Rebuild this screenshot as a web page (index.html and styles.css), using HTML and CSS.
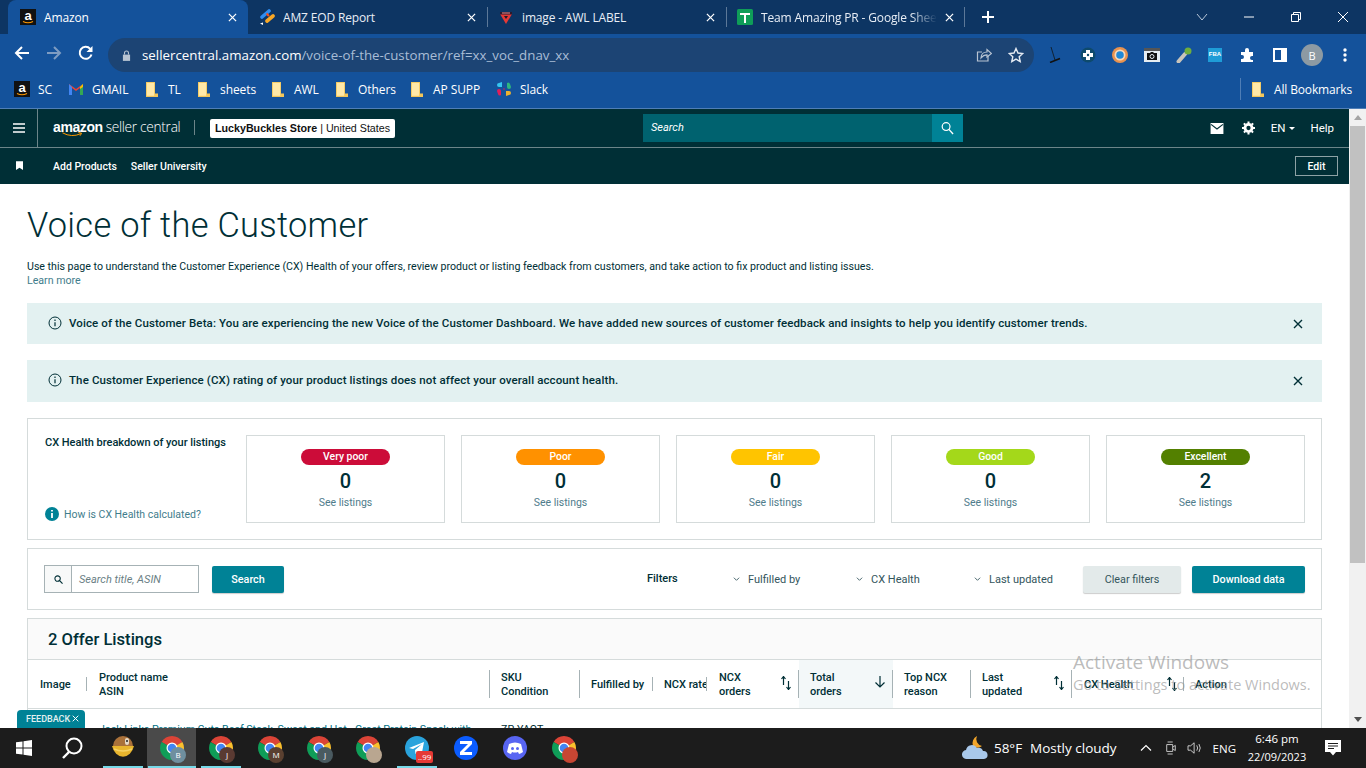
FILE: index.html
```html
<!DOCTYPE html>
<html lang="en">
<head>
    <meta charset="UTF-8">
    <title>Voice of the Customer</title>
    <link rel="stylesheet" href="styles.css">
</head>
<body>

<svg class="defs" width="0" height="0">
    <symbol id="chrome" viewBox="0 0 24 24">
        <path fill="#db4437" d="M12 12L1.610 6A12 12 0 0 1 22.390 6z"/>
        <path fill="#fbc02d" d="M12 12L22.390 6A12 12 0 0 1 12 24z"/>
        <path fill="#0f9d58" d="M12 12L12 24A12 12 0 0 1 1.610 6z"/>
        <circle cx="12" cy="12" r="5.500" fill="#fff"/>
        <circle cx="12" cy="12" r="4.300" fill="#4285f4"/>
    </symbol>
    <symbol id="folder" viewBox="0 0 12 15">
        <path fill="#f3c65a" d="M0 0h9v11.500h3V15H0z"/>
        <path fill="#ffe9a8" d="M.8.800h7.400v13H.8z"/>
    </symbol>
    <symbol id="amz" viewBox="0 0 16 16">
        <rect width="16" height="16" fill="#111"/>
        <text x="8" y="11" text-anchor="middle" font-family="Liberation Sans" font-size="13" font-weight="700" fill="#fff">a</text>
        <path d="M3 12.500q5 2.500 10 0" fill="none" stroke="#f90" stroke-width="1.200"/>
    </symbol>
    <symbol id="sort" viewBox="0 0 12 14">
        <path d="M3.500 9V1M1.500 3l2-2.500 2 2.500" fill="none" stroke="#002f36" stroke-width="1.200"/>
        <path d="M8.500 5v8M6.500 11l2 2.500 2-2.500" fill="none" stroke="#002f36" stroke-width="1.200"/>
    </symbol>
    <symbol id="close" viewBox="0 0 10 10">
        <path d="M1 1l8 8M9 1l-8 8" fill="none" stroke="currentColor" stroke-width="1.400"/>
    </symbol>
    <symbol id="info" viewBox="0 0 14 14">
        <circle cx="7" cy="7" r="6" fill="none" stroke="#002f36" stroke-width="1"/>
        <path d="M7 6.200v4M7 3.600v1.300" stroke="#002f36" stroke-width="1.200"/>
    </symbol>
    <symbol id="chev" viewBox="0 0 8 6">
        <path d="M1 1.500l3 3 3-3" fill="none" stroke="#33555c" stroke-width="1"/>
    </symbol>
</svg>

<div class="tabstrip">
    <div class="tab active">
        <svg class="fav"><use href="#amz"/></svg>
        <span class="tab-title">Amazon</span>
        <svg class="tab-x"><use href="#close"/></svg>
    </div>
    <div class="tab">
        <svg class="fav" viewBox="0 0 16 16"><path d="M3 8L10 2" stroke="#2d8cf0" stroke-width="3.600" stroke-linecap="round"/><path d="M8 12l6-5" stroke="#f9a825" stroke-width="3.600" stroke-linecap="round"/><path d="M8 6.500l1.500-1.300" stroke="#f4511e" stroke-width="3.600"/><path d="M1 14.500l3-1v2.500z" fill="#fff"/></svg>
        <span class="tab-title">AMZ EOD Report</span>
        <svg class="tab-x"><use href="#close"/></svg>
    </div>
    <div class="tab sep">
        <svg class="fav" viewBox="0 0 16 16"><path d="M2 5h12l-6 10z" fill="#e53935"/><path d="M2 3h12v2.500H2z" fill="#2a1a2e"/><path d="M4 4h8" stroke="#e88" stroke-width="1"/><path d="M6 7h4l-2 3z" fill="#1a1a2a"/></svg>
        <span class="tab-title">image - AWL LABEL</span>
        <svg class="tab-x"><use href="#close"/></svg>
    </div>
    <div class="tab sep last">
        <svg class="fav" viewBox="0 0 16 16"><rect width="16" height="16" rx="1.500" fill="#0f9d58"/><path d="M3 4h10v2H9v8H7V6H3z" fill="#fff"/></svg>
        <span class="tab-title fade">Team Amazing PR - Google Sheets</span>
        <svg class="tab-x"><use href="#close"/></svg>
    </div>
    <svg class="newtab" viewBox="0 0 14 14"><path d="M7 1v12M1 7h12" stroke="#fff" stroke-width="2"/></svg>
    <div class="winctl">
        <svg viewBox="0 0 12 8"><path d="M1 1l5 6 5-6" fill="none" stroke="#b9c8da" stroke-width="1"/></svg>
        <svg viewBox="0 0 12 12"><path d="M1 6h10" stroke="#fff" stroke-width="1"/></svg>
        <svg viewBox="0 0 12 12"><path d="M1.500 3.500h7v7h-7zM3.500 3.500v-2h7v7h-2" fill="none" stroke="#fff" stroke-width="1"/></svg>
        <svg viewBox="0 0 12 12"><path d="M1 1l10 10M11 1L1 11" stroke="#fff" stroke-width="1"/></svg>
    </div>
</div>

<div class="toolbar">
    <svg class="nav-ic" viewBox="0 0 16 16"><path d="M15 8H2M8 2L2 8l6 6" fill="none" stroke="#fff" stroke-width="2"/></svg>
    <svg class="nav-ic" viewBox="0 0 16 16"><path d="M1 8h13M8 2l6 6-6 6" fill="none" stroke="#7e9cc2" stroke-width="2"/></svg>
    <svg class="nav-ic" viewBox="0 0 16 16"><path d="M13.500 9.500A6 6 0 1 1 12.200 3.800" fill="none" stroke="#fff" stroke-width="2"/><path d="M14.500 1v6h-6z" fill="#fff"/></svg>
    <div class="omnibox">
        <svg class="lock" viewBox="0 0 10 12"><path d="M1 5h8v7H1z" fill="#b8c4d2"/><path d="M2.800 5V3.200a2.200 2.200 0 0 1 4.400 0V5" fill="none" stroke="#b8c4d2" stroke-width="1.200"/></svg>
        <span class="url">sellercentral.amazon.com<span class="url-path">/voice-of-the-customer/ref=xx_voc_dnav_xx</span></span>
        <svg class="omni-ic share" viewBox="0 0 16 16"><path d="M12 9v5H1.500V5H6" fill="none" stroke="#b8c4d2" stroke-width="1.200"/><path d="M5 11c0-4 3-6 6-6V2.500L15.500 6.500 11 10V7.800C8.500 7.800 6.500 9 5 11z" fill="none" stroke="#b8c4d2" stroke-width="1.200"/></svg>
        <svg class="omni-ic" viewBox="0 0 16 16"><path d="M8 1.500l2 4.500 4.800.5-3.600 3.200 1 4.800L8 12.100l-4.200 2.400 1-4.800L1.200 6.500 6 6z" fill="none" stroke="#e4eaf2" stroke-width="1.400"/></svg>
    </div>
    <div class="extensions">
        <svg viewBox="0 0 16 16"><path d="M3 0l4 13" stroke="#123" stroke-width="1" fill="none"/><path d="M2 15.500l10-4" stroke="#111" stroke-width="1.600" fill="none"/></svg>
        <svg viewBox="0 0 16 16"><circle cx="8" cy="8" r="7.500" fill="#0e4a6c"/><path d="M6 3h4v3h3v4h-3v3H6v-3H3V6h3z" fill="#fff"/><circle cx="8" cy="8" r="1.200" fill="#0e4a6c"/></svg>
        <svg viewBox="0 0 16 16"><circle cx="8" cy="8" r="8" fill="#e8924f"/><circle cx="8" cy="8" r="5.500" fill="#f5d9bc"/><circle cx="8" cy="8" r="3.800" fill="#1e88d8"/></svg>
        <svg viewBox="0 0 16 16"><rect y="1" width="16" height="14" fill="#e6edf2"/><rect y="1" width="16" height="3" fill="#555"/><path d="M3 6h3l1-1h2l1 1h3v7H3z" fill="#111"/><circle cx="8" cy="9.500" r="2" fill="none" stroke="#e6edf2"/></svg>
        <svg viewBox="0 0 16 16"><path d="M2.500 14.500L9 7" stroke="#c9c4ba" stroke-width="4" stroke-linecap="round"/><circle cx="12" cy="4" r="3.500" fill="#6fae3e"/></svg>
        <svg viewBox="0 0 16 16"><rect y="1" width="14" height="14" fill="#1e9cd7"/><text x="7" y="9" text-anchor="middle" font-family="Liberation Sans" font-size="6" font-weight="700" fill="#fff">FBA</text></svg>
        <svg viewBox="0 0 16 16"><path d="M1 5h4V3a2 2 0 0 1 4 0v2h4v4h-1a2 2 0 0 0 0 4h1v2H1v-3h1a2 2 0 0 0 0-4H1z" fill="#fff"/></svg>
        <svg viewBox="0 0 16 16"><rect x="1" y="1" width="14" height="14" fill="#fff"/><rect x="3" y="3" width="6" height="10" fill="#14529b"/></svg>
        <span class="avatar">B</span>
        <svg viewBox="0 0 16 16"><circle cx="8" cy="3" r="1.700" fill="#fff"/><circle cx="8" cy="8" r="1.700" fill="#fff"/><circle cx="8" cy="13" r="1.700" fill="#fff"/></svg>
    </div>
</div>

<div class="bookmarks">
    <span class="bm bm-sc"><svg class="bm-ic"><use href="#amz"/></svg>SC</span>
    <span class="bm bm-gm"><svg class="bm-ic" viewBox="0 0 16 16"><path d="M1 3v11h3V7l4 3 4-3v7h3V3l-7 5z" fill="#ea4335"/><path d="M1 3v11h3V6z" fill="#4285f4"/><path d="M15 3v11h-3V6z" fill="#34a853"/><path d="M12 6l3-3v3l-3 2z" fill="#fbbc04"/></svg>GMAIL</span>
    <span class="bm bm-tl"><svg class="bm-fd"><use href="#folder"/></svg>TL</span>
    <span class="bm bm-sh"><svg class="bm-fd"><use href="#folder"/></svg>sheets</span>
    <span class="bm bm-aw"><svg class="bm-fd"><use href="#folder"/></svg>AWL</span>
    <span class="bm bm-ot"><svg class="bm-fd"><use href="#folder"/></svg>Others</span>
    <span class="bm bm-ap"><svg class="bm-fd"><use href="#folder"/></svg>AP SUPP</span>
    <span class="bm"><svg class="bm-ic" viewBox="0 0 16 16"><path d="M6 1v5H3a2 2 0 0 1 0-4z" fill="#36c5f0"/><path d="M15 6a2 2 0 0 1-4 0V2a2 2 0 0 1 3 1z" fill="#2eb67d"/><path d="M10 15v-5h3a2 2 0 0 1 0 4z" fill="#ecb22e"/><path d="M1 10a2 2 0 0 1 4 0v4a2 2 0 0 1-3-1z" fill="#e01e5a"/><path d="M7 7h2v2H7z" fill="#6b3a7d"/></svg>Slack</span>
    <span class="bm bm-all"><svg class="bm-fd"><use href="#folder"/></svg>All Bookmarks</span>
</div>

<div class="viewport">
    <div class="page">
        <div class="nav-top">
            <svg class="burger" viewBox="0 0 12 10"><path d="M0 1h12M0 5h12M0 9h12" stroke="#fff" stroke-width="1.500"/></svg>
            <div class="logo">
                <span class="logo-amazon">amazon</span><span class="logo-sc">seller central</span>
                <svg class="smile" viewBox="0 0 26 6"><path d="M1 1q11 6 22 1M20 0.500l4 1-2 3" fill="none" stroke="#f90" stroke-width="1.200"/></svg>
            </div>
            <span class="nav-sep"></span>
            <div class="store"><strong>LuckyBuckles Store</strong> | United States</div>
            <div class="nav-search">
                <span class="nav-search-input">Search</span>
                <span class="nav-search-btn"><svg viewBox="0 0 14 14"><circle cx="5.500" cy="5.500" r="4.200" fill="none" stroke="#fff" stroke-width="1.300"/><path d="M8.500 8.500l4.500 5" stroke="#fff" stroke-width="1.500"/></svg></span>
            </div>
            <div class="nav-right">
                <svg class="mail" viewBox="0 0 14 12"><path d="M0 0h14v12H0z" fill="#fff"/><path d="M0.500 1.500L7 6.500l6.500-5" fill="none" stroke="#002f36" stroke-width="1.300"/></svg>
                <svg class="gear" viewBox="0 0 14 14"><circle cx="7" cy="7" r="3.800" fill="none" stroke="#fff" stroke-width="3"/><path d="M7 0v14M0 7h14M2 2l10 10M12 2L2 12" stroke="#fff" stroke-width="2.200" stroke-dasharray="2.200 9.600"/></svg>
                <span class="lang">EN</span><span class="caret"></span>
                <span class="help">Help</span>
            </div>
        </div>
        <div class="nav-bottom">
            <svg class="bookmark" viewBox="0 0 8 10"><path d="M0 0h8v10L4 7.500 0 10z" fill="#fff"/></svg>
            <span class="nav-link first">Add Products</span>
            <span class="nav-link">Seller University</span>
            <span class="edit-btn">Edit</span>
        </div>

        <div class="content">
            <h1>Voice of the Customer</h1>
            <p class="intro">Use this page to understand the Customer Experience (CX) Health of your offers, review product or listing feedback from customers, and take action to fix product and listing issues.</p>
            <a class="learn">Learn more</a>

            <div class="banner">
                <svg class="banner-info"><use href="#info"/></svg>
                <span class="banner-text">Voice of the Customer Beta: You are experiencing the new Voice of the Customer Dashboard. We have added new sources of customer feedback and insights to help you identify customer trends.</span>
                <svg class="banner-x"><use href="#close"/></svg>
            </div>
            <div class="banner second">
                <svg class="banner-info"><use href="#info"/></svg>
                <span class="banner-text">The Customer Experience (CX) rating of your product listings does not affect your overall account health.</span>
                <svg class="banner-x"><use href="#close"/></svg>
            </div>

            <div class="box breakdown">
                <div class="breakdown-side">
                    <div class="breakdown-title">CX Health breakdown of your listings</div>
                    <div class="how">
                        <svg viewBox="0 0 14 14"><circle cx="7" cy="7" r="7" fill="#008296"/><path d="M7 6v5M7 3v1.600" stroke="#fff" stroke-width="1.800"/></svg>
                        How is CX Health calculated?
                    </div>
                </div>
                <div class="card"><span class="pill verypoor">Very poor</span><span class="count">0</span><span class="see">See listings</span></div>
                <div class="card"><span class="pill poor">Poor</span><span class="count">0</span><span class="see">See listings</span></div>
                <div class="card"><span class="pill fair">Fair</span><span class="count">0</span><span class="see">See listings</span></div>
                <div class="card"><span class="pill good">Good</span><span class="count">0</span><span class="see">See listings</span></div>
                <div class="card"><span class="pill excellent">Excellent</span><span class="count">2</span><span class="see">See listings</span></div>
            </div>

            <div class="box filters">
                <div class="search-field">
                    <span class="search-ic"><svg viewBox="0 0 10 10"><circle cx="4" cy="4" r="3" fill="none" stroke="#002f36" stroke-width="1.200"/><path d="M6.200 6.200L9.500 9.500" stroke="#002f36" stroke-width="1.300"/></svg></span>
                    <span class="search-ph">Search title, ASIN</span>
                </div>
                <button class="btn teal search-btn">Search</button>
                <span class="filters-label">Filters</span>
                <span class="filter f1"><svg><use href="#chev"/></svg>Fulfilled by</span>
                <span class="filter f2"><svg><use href="#chev"/></svg>CX Health</span>
                <span class="filter f3"><svg><use href="#chev"/></svg>Last updated</span>
                <button class="btn clear">Clear filters</button>
                <button class="btn teal download">Download data</button>
            </div>

            <div class="box listings">
                <div class="listings-head">2 Offer Listings</div>
                <div class="cols">
                    <div class="col short c-image"><span>Image</span></div>
                    <div class="col c-name"><span>Product name<br>ASIN</span></div>
                    <div class="col c-sku"><span>SKU<br>Condition</span></div>
                    <div class="col short c-ful"><span>Fulfilled by</span></div>
                    <div class="col short c-rate"><span>NCX rate</span></div>
                    <div class="col c-orders"><span>NCX<br>orders</span><svg class="sort"><use href="#sort"/></svg></div>
                    <div class="col c-total"><span>Total<br>orders</span><svg class="sort-down" viewBox="0 0 12 12"><path d="M6 0v11M1.500 6.500L6 11l4.500-4.500" fill="none" stroke="#002f36" stroke-width="1.200"/></svg></div>
                    <div class="col c-top"><span>Top NCX<br>reason</span></div>
                    <div class="col c-last"><span>Last<br>updated</span><svg class="sort"><use href="#sort"/></svg></div>
                    <div class="col short c-cx"><span>CX Health</span><svg class="sort"><use href="#sort"/></svg></div>
                    <div class="col c-action"><span>Action</span></div>
                </div>
                <div class="row">
                    <a class="row-name">Jack Links Premium Cuts Beef Steak, Sweet and Hot - Great Protein Snack with</a>
                    <span class="row-sku">ZP-YAQT</span>
                </div>
            </div>
        </div>

        <div class="feedback">FEEDBACK <svg><use href="#close"/></svg></div>
        <div class="watermark">
            <div class="wm-title">Activate Windows</div>
            <div class="wm-sub">Go to Settings to activate Windows.</div>
        </div>
    </div>
    <div class="scrollbar">
        <span class="sb-up"></span>
        <span class="sb-thumb"></span>
        <span class="sb-down"></span>
    </div>
</div>

<div class="taskbar">
    <svg class="tb-win" viewBox="0 0 16 16"><path d="M0 2.300L6.500 1.400V7.500H0zM7.500 1.300L16 0v7.500H7.500zM0 8.500h6.500v6.100L0 13.700zM7.500 8.500H16V16l-8.500-1.300z" fill="#fff"/></svg>
    <svg class="tb-search" viewBox="0 0 22 22"><circle cx="13" cy="9" r="7.500" fill="none" stroke="#fff" stroke-width="2"/><path d="M8 15l-6 6" stroke="#fff" stroke-width="2.400"/></svg>
    <div class="tb-app running"><svg class="tb-pot" viewBox="0 0 24 26"><path d="M2 11a10 10 0 0 1 20 0z" fill="#a9713a"/><path d="M1 11h22a11.500 15 0 0 1-22 0z" fill="#e8b52e"/><path d="M3 14q9 4 18 0" fill="none" stroke="#f6d365" stroke-width="1.500"/><rect x="14" y="3" width="4" height="7" rx="2" fill="#e4d9c6"/><circle cx="16" cy="6" r="1" fill="#222"/></svg></div>
    <div class="tb-app running current"><svg><use href="#chrome"/></svg><span class="tb-badge b-b">B</span></div>
    <div class="tb-app running"><svg><use href="#chrome"/></svg><span class="tb-badge b-j">J</span></div>
    <div class="tb-app"><svg><use href="#chrome"/></svg><span class="tb-badge b-m">M</span></div>
    <div class="tb-app"><svg><use href="#chrome"/></svg><span class="tb-badge b-j2">J</span></div>
    <div class="tb-app"><svg><use href="#chrome"/></svg><span class="tb-badge b-p"></span></div>
    <div class="tb-app running"><svg viewBox="0 0 24 24"><circle cx="12" cy="12" r="12" fill="#2aa3dc"/><path d="M4 12l15-6-2.500 13-4-3-2 2-.5-4 7-6-9 5z" fill="#fff"/></svg><span class="tb-count">..99</span></div>
    <div class="tb-app"><svg viewBox="0 0 24 24"><circle cx="12" cy="12" r="12" fill="#0b5cff"/><path d="M6 5h12v3l-8 8h8v3H6v-3l8-8H6z" fill="#fff"/></svg></div>
    <div class="tb-app"><svg viewBox="0 0 24 24"><circle cx="12" cy="12" r="12" fill="#5865f2"/><path d="M6 8q6-3 12 0l2 8q-2 1.500-4 2l-1-2q-3 1-6 0l-1 2q-2-.5-4-2z" fill="#fff"/><circle cx="9.500" cy="12.500" r="1.500" fill="#5865f2"/><circle cx="14.500" cy="12.500" r="1.500" fill="#5865f2"/></svg></div>
    <div class="tb-app"><svg><use href="#chrome"/></svg><span class="tb-badge b-r"></span></div>

    <div class="tray">
        <svg class="tr-weather" viewBox="0 0 26 26"><path d="M15 1a7 7 0 0 0 5 10 7 7 0 0 1-9 0 8 8 0 0 1 4-10z" fill="#f2a52a"/><path d="M5 24a4.500 4.500 0 0 1-1-9 6 6 0 0 1 11-2 5 5 0 0 1 6 3 4 4 0 0 1 1 8z" fill="#a9c8ea"/></svg>
        <span class="tr-temp">58°F</span>
        <span class="tr-cond">Mostly cloudy</span>
        <svg class="tr-chev" viewBox="0 0 12 8"><path d="M1 6.500l5-5 5 5" fill="none" stroke="#fff" stroke-width="1.200"/></svg>
        <svg class="tr-meet" viewBox="0 0 14 18"><path d="M2 5h7v8H2zM9 8l3-2v6l-3-2" fill="none" stroke="#ddd" stroke-width="1"/><path d="M3 2h6M3 16h6" stroke="#ddd" stroke-width="1"/></svg>
        <svg class="tr-vol" viewBox="0 0 18 16"><path d="M1 5.500h3L8 2v12l-4-3.500H1z" fill="none" stroke="#ddd" stroke-width="1"/><path d="M11 5q2 3 0 6M13.500 3.500q3 4.500 0 9" fill="none" stroke="#ddd" stroke-width="1"/></svg>
        <span class="tr-lang">ENG</span>
        <div class="tr-clock"><span>6:46 pm</span><span class="tr-date">22/09/2023</span></div>
        <svg class="tr-note" viewBox="0 0 16 16"><path d="M0 0h16v12h-5l-3 3.500L5 12H0z" fill="#fff"/><path d="M3 3.500h10M3 6h10M3 8.500h6" stroke="#1c1c1c" stroke-width="1"/></svg>
    </div>
</div>

</body>
</html>
```

FILE: styles.css
```css
* { box-sizing: border-box; }
html, body { margin: 0; height: 768px; overflow: hidden; }
body { font-family: "Open Sans", "Noto Sans", sans-serif; display: flex; flex-direction: column; background: #fff; }
.defs { position: absolute; }

/* browser chrome */
.tabstrip { height: 34px; background: #0d3563; display: flex; align-items: center; padding-left: 8px; color: #fff; flex: none; }
.tab { width: 239px; height: 34px; display: flex; align-items: center; padding-left: 11px; position: relative; font-size: 12px; letter-spacing: -.15px; color: #e8eef6; }
.tab.active { width: 240px; padding-left: 12px; background: #14529b; border-radius: 8px 8px 0 0; color: #fff; }
.tab.sep::before { content: ""; position: absolute; left: 0; top: 7px; bottom: 7px; width: 1px; background: #5c7898; }
.tab.last::after { content: ""; position: absolute; right: 0; top: 7px; bottom: 7px; width: 1px; background: #5c7898; }
.fav { width: 16px; height: 16px; flex: none; margin-right: 8px; }
.tab-title { flex: 1; white-space: nowrap; overflow: hidden; }
.tab-title.fade { -webkit-mask-image: linear-gradient(90deg, #000 85%, transparent); mask-image: linear-gradient(90deg, #000 85%, transparent); }
.tab-x { width: 9px; height: 9px; flex: none; margin: 0 11px 0 8px; color: #fff; }
.newtab { width: 14px; height: 14px; margin-left: 16px; }
.winctl { margin-left: auto; display: flex; align-items: center; }
.winctl svg { width: 12px; height: 12px; margin-left: 35px; }
.winctl svg:last-child { margin-right: 17px; }

.toolbar { height: 38px; background: #14529b; display: flex; align-items: center; padding-left: 14px; flex: none; }
.nav-ic { width: 16px; height: 16px; margin-right: 16px; }
.omnibox { width: 926px; height: 34px; margin: 4px 0 0 -2px; background: #1c4474; border-radius: 17px; display: flex; align-items: center; padding: 0 10px 0 14px; }
.lock { width: 9px; height: 11px; margin-right: 11px; }
.url { font-size: 13.300px; color: #fff; flex: 1; white-space: nowrap; }
.url-path { color: #a9bdd6; }
.omni-ic { width: 16px; height: 16px; margin-left: 16px; }
.extensions { display: flex; align-items: center; margin: 4px 0 0 14px; }
.extensions svg { width: 16px; height: 16px; margin-right: 16px; }
.extensions svg:last-child { margin: 0 0 0 3px; }
.avatar { width: 22px; height: 22px; margin: 0 11px 0 -3px; border-radius: 50%; background: #8d9aa3; color: #fff; font-size: 11px; display: flex; align-items: center; justify-content: center; }

.bookmarks { height: 37px; background: #14529b; border-bottom: 1px solid #4f7eb6; display: flex; align-items: center; padding: 0 0 2px 14px; font-size: 12px; letter-spacing: -.08px; color: #fff; flex: none; }
.bm { display: flex; align-items: center; }
.bm-ic { width: 16px; height: 16px; margin-right: 8px; }
.bm-fd { width: 12px; height: 15px; margin-right: 10px; }
.bm-sc { width: 54px; }
.bm-gm { width: 78px; }
.bm-tl { width: 52px; }
.bm-sh { width: 74px; }
.bm-aw { width: 64px; }
.bm-ot { width: 75px; }
.bm-ap { width: 85px; }
.bm-all { margin-left: auto; padding-left: 11px; margin-right: 14px; height: 22px; border-left: 1px solid #4f7eb6; letter-spacing: -.15px; }

/* page + scrollbar */
.viewport { flex: 1; display: flex; min-height: 0; }
.page { flex: 1; position: relative; overflow: hidden; }
.scrollbar { width: 17px; background: #f1f1f1; display: flex; flex-direction: column; align-items: center; flex: none; position: relative; }
.sb-up { margin-top: 6px; border: 4px solid transparent; border-top: 0; border-bottom: 5px solid #a3a3a3; }
.sb-thumb { width: 15px; height: 437px; background: #c1c1c1; margin-top: 6px; }
.sb-down { margin-top: auto; margin-bottom: 6px; border: 4px solid transparent; border-bottom: 0; border-top: 5px solid #505050; }

.nav-top { height: 39px; background: #002f36; border-bottom: 1px solid #6c8589; display: flex; align-items: center; color: #fff; }
.burger { width: 12px; height: 10px; margin-left: 13px; }
.logo { margin-left: 12px; padding-left: 15px; height: 38px; border-left: 1px solid #6c8589; width: 157px; display: flex; align-items: center; position: relative; white-space: nowrap; }
.logo-amazon { font-family: "Liberation Sans", sans-serif; font-weight: 700; font-size: 14px; letter-spacing: -.4px; margin-top: -2px; }
.logo-sc { font-family: "Open Sans", sans-serif; font-weight: 300; font-size: 13.700px; margin-left: 3px; letter-spacing: -.3px; margin-top: -3px; }
.smile { position: absolute; left: 22px; top: 23px; width: 25px; height: 5px; }
.nav-sep { width: 1px; height: 15px; background: #6c8589; flex: none; margin-top: -1px; }
.store { margin: 0 0 0 15px; height: 19px; padding: 0 5px; background: #fff; color: #0f1111; border-radius: 2px; font: 10.700px/19px "Liberation Sans", sans-serif; white-space: nowrap; }
.store strong { font-weight: 700; }
.nav-search { position: absolute; left: 643px; top: 5px; width: 320px; height: 28px; background: #00626f; display: flex; }
.nav-search-input { flex: 1; color: #fff; font: italic 11px/28px Roboto, sans-serif; padding-left: 8px; }
.nav-search-btn { width: 31px; background: #008296; display: flex; align-items: center; justify-content: center; }
.nav-search-btn svg { width: 13px; height: 14px; }
.nav-right { margin-left: auto; display: flex; align-items: center; padding-right: 15px; font: 11.500px Roboto, sans-serif; }
.mail { width: 14px; height: 11px; margin-right: 18px; }
.gear { width: 13px; height: 14px; margin-right: 16px; }
.caret { border: 3px solid transparent; border-top: 3px solid #fff; border-bottom: 0; margin: 1px 15px 0 4px; }

.nav-bottom { height: 36px; background: #002f36; display: flex; align-items: center; color: #fff; font: 500 10.500px Roboto, sans-serif; }
.bookmark { width: 7px; height: 9px; margin: -2px 30px 0 16px; }
.nav-link { margin-right: 14px; }
.edit-btn { margin-left: auto; margin-right: 11px; width: 43px; height: 20px; border: 1px solid #8da2a5; display: flex; align-items: center; justify-content: center; }

.content { padding: 0 27px; color: #002f36; font-family: Roboto, sans-serif; }
h1 { margin: 21px 0 0; font: 300 34.400px/40px Roboto, sans-serif; letter-spacing: .3px; color: #002f36; }
.intro { margin: 15px 0 0; font-size: 10.610px; line-height: 14px; }
.learn { display: block; font-size: 10.610px; line-height: 14px; color: #3f7d8c; }
.banner { height: 41px; margin-top: 15px; background: #e3f1f1; display: flex; align-items: center; padding: 0 19px 2px 21px; font-size: 11.500px; letter-spacing: .115px; font-weight: 500; }
.banner.second { height: 42px; margin-top: 16px; }
.banner-info { width: 14px; height: 14px; margin-right: 7px; }
.banner-text { flex: 1; }
.banner-x { width: 10px; height: 10px; color: #002f36; margin-top: 2px; }

.box { border: 1px solid #d5dbdb; }
.breakdown { margin-top: 16px; height: 122px; display: flex; gap: 16px; padding: 16px 16px 16px 17px; }
.breakdown-side { width: 185px; display: flex; flex-direction: column; justify-content: space-between; font-size: 11px; font-weight: 500; white-space: nowrap; padding-bottom: 2px; }
.breakdown-title { margin-top: 1px; line-height: 14px; letter-spacing: -.02px; }
.how { display: flex; align-items: center; font-weight: 400; color: #3f7d8c; font-size: 10.500px; }
.how svg { width: 14px; height: 14px; margin-right: 5px; }
.card { width: 199px; flex: none; height: 88px; border: 1px solid #d5dbdb; display: flex; flex-direction: column; align-items: center; padding-top: 13px; }
.pill { width: 89px; height: 16px; border-radius: 8px; color: #fff; font-size: 10.400px; font-weight: 500; line-height: 16px; text-align: center; }
.verypoor { background: #cc0c39; }
.poor { background: #ff9100; }
.fair { background: #ffc400; }
.good { background: #a4d81a; }
.excellent { background: #538000; }
.count { font-size: 20px; font-weight: 500; line-height: 22px; margin-top: 5px; }
.see { font-size: 10.500px; line-height: 14px; margin-top: 4px; color: #4f7c8b; }

.filters { margin-top: 8px; height: 62px; display: flex; align-items: center; position: relative; padding-left: 16px; font-size: 11px; }
.search-field { width: 155px; height: 28px; border: 1px solid #a6b2b5; display: flex; align-items: center; }
.search-ic { width: 27px; height: 26px; background: #f8f9f9; border-right: 1px solid #a6b2b5; display: flex; align-items: center; justify-content: center; flex: none; }
.search-ic svg { width: 9px; height: 9px; }
.search-ph { font-style: italic; color: #6b7f85; padding-left: 7px; }
.btn { border: none; height: 27px; border-radius: 2px; font: 500 10.800px Roboto, sans-serif; box-shadow: 0 1px 1px rgba(0, 0, 0, .2); padding: 0; }
.teal { background: #008296; color: #fff; }
.search-btn { width: 72px; margin-left: 13px; }
.filters-label { font-weight: 500; margin-left: 363px; margin-top: -1px; width: 30px; }
.filter { display: flex; align-items: center; color: #33555c; }
.filter svg { width: 7px; height: 6px; margin-right: 8px; }
.f1 { margin-left: 56px; width: 123px; }
.f2 { width: 118px; }
.f3 { width: 109px; }
.clear { width: 98px; background: #e3eaea; color: #33555c; font-weight: 400; }
.download { width: 113px; margin-left: 11px; }

.listings { margin-top: 8px; height: 200px; }
.listings-head { height: 41px; background: #fafafa; border-bottom: 1px solid #d5dbdb; font-size: 16.600px; font-weight: 500; line-height: 41px; padding-left: 20px; }
.cols { height: 49px; display: flex; border-bottom: 1px solid #d5dbdb; font-size: 11px; font-weight: 500; line-height: 14px; }
.col { display: flex; align-items: center; position: relative; padding: 2px 0 0 11px; flex: none; white-space: nowrap; }
.col::after { content: ""; position: absolute; right: 0; top: 10px; bottom: 10px; width: 1px; background: #a6b2b5; }
.col.short::after { top: 17px; bottom: 17px; }
.c-image { width: 59px; padding-left: 12px; }
.c-name { width: 403px; padding-left: 12px; }
.c-sku { width: 90px; }
.c-ful { width: 73px; }
.c-rate { width: 54px; }
.c-rate span { overflow: hidden; }
.c-orders { width: 92px; padding-left: 12px; }
.c-total { width: 94px; background: #f3f8f9; }
.c-top { width: 78px; }
.c-last { width: 101px; }
.c-cx { width: 112px; padding-left: 12px; }
.c-action { width: 137px; }
.c-action::after { display: none; }
.sort { position: absolute; right: 7px; top: 16px; width: 12px; height: 14px; }
.c-cx .sort { right: 6px; top: 17px; }
.sort-down { position: absolute; right: 7px; top: 16px; width: 12px; height: 12px; }
.row { display: flex; font-size: 10.650px; padding: 14px 0 0 71px; }
.row-name { width: 402px; color: #007185; white-space: nowrap; }

.feedback { position: absolute; left: 17px; top: 601px; width: 68px; height: 22px; background: #008296; border-radius: 4px 4px 0 0; color: #e3f1f1; font: 500 9px/19px Roboto, sans-serif; padding-left: 9px; white-space: nowrap; }
.feedback svg { width: 7px; height: 7px; color: #fff; }
.watermark { position: absolute; left: 1073px; top: 541px; color: rgba(150, 150, 150, .65); font-family: "Open Sans", sans-serif; white-space: nowrap; pointer-events: none; }
.wm-title { font-size: 19px; line-height: 24px; }
.wm-sub { font-size: 14.500px; line-height: 20px; margin-top: 1px; }

/* windows taskbar */
.taskbar { height: 40px; background: #1c1c1c; display: flex; align-items: center; flex: none; color: #fff; font-family: "Open Sans", sans-serif; position: relative; }
.tb-win { width: 16px; height: 16px; margin: 0 0 0 16px; }
.tb-search { width: 22px; height: 22px; margin: 0 15px 0 29px; }
.tb-app { width: 49px; height: 40px; display: flex; align-items: center; justify-content: center; position: relative; }
.tb-app svg { width: 24px; height: 24px; }
.tb-app svg.tb-pot { height: 26px; }
.tb-app.running::after { content: ""; position: absolute; left: 5px; right: 4px; bottom: 0; height: 2px; background: #76d9e8; }
.tb-app.current { background: #4a4a4a; }
.tb-app.current::after { left: 1px; right: 0; }
.tb-badge { position: absolute; left: 23px; top: 19px; width: 16px; height: 16px; border-radius: 50%; font-size: 8px; line-height: 16px; text-align: center; }
.b-b { background: #6f8f9f; }
.b-j { background: #5a3a32; }
.b-m { background: #5a4030; }
.b-j2 { background: #4a5a60; }
.b-p { background: #b9a690; }
.b-r { background: #c74633; }
.tb-count { position: absolute; left: 24px; top: 23px; background: #e53935; color: #fff; font-size: 8px; line-height: 12px; padding: 0 2px; border-radius: 2px; }
.tray { margin-left: auto; display: flex; align-items: center; font-size: 13.500px; }
.tr-weather { width: 26px; height: 26px; margin-right: 6px; }
.tr-temp { margin-right: 8px; }
.tr-cond { margin-right: 23px; white-space: nowrap; }
.tr-chev { width: 12px; height: 8px; margin-right: 13px; }
.tr-meet { width: 12px; height: 16px; margin-right: 10px; }
.tr-vol { width: 16px; height: 14px; margin-right: 10px; }
.tr-lang { font-size: 11.500px; }
.tr-clock { width: 82px; display: flex; flex-direction: column; align-items: center; font-size: 11.500px; line-height: 18px; margin-right: 7px; }
.tr-date { font-size: 11px; }
.tr-note { width: 16px; height: 16px; margin: 0 25px 0 0; }
```
